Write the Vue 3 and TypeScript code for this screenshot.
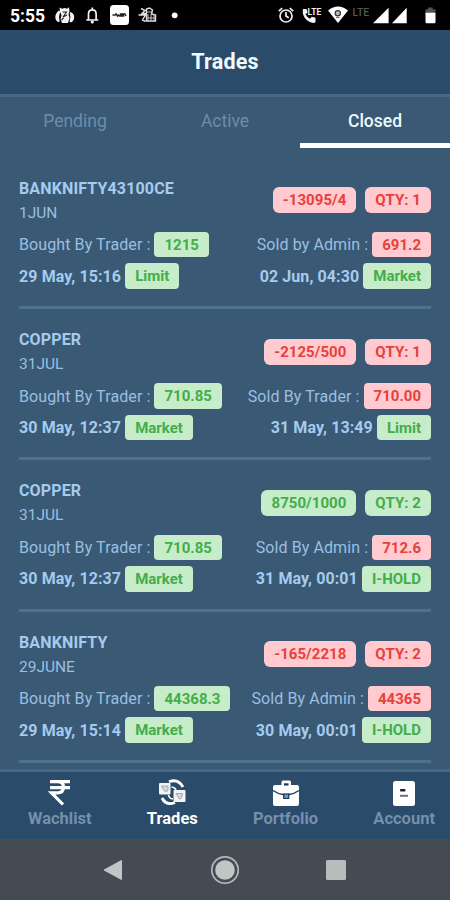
<script setup lang="ts">
type Tone = 'green' | 'red'
interface Leg { label: string; price: string; time: string; kind: string }
interface Trade {
  name: string
  expiry: string
  result: string
  qty: number
  tone: Tone
  buy: Leg
  sell: Leg
}

const tabs: string[] = ['Pending', 'Active', 'Closed']
const activeTab = 'Closed'

const trades: Trade[] = [
  {
    name: 'BANKNIFTY43100CE', expiry: '1JUN', result: '-13095/4', qty: 1, tone: 'red',
    buy: { label: 'Bought By Trader :', price: '1215', time: '29 May, 15:16', kind: 'Limit' },
    sell: { label: 'Sold by Admin :', price: '691.2', time: '02 Jun, 04:30', kind: 'Market' },
  },
  {
    name: 'COPPER', expiry: '31JUL', result: '-2125/500', qty: 1, tone: 'red',
    buy: { label: 'Bought By Trader :', price: '710.85', time: '30 May, 12:37', kind: 'Market' },
    sell: { label: 'Sold By Trader :', price: '710.00', time: '31 May, 13:49', kind: 'Limit' },
  },
  {
    name: 'COPPER', expiry: '31JUL', result: '8750/1000', qty: 2, tone: 'green',
    buy: { label: 'Bought By Trader :', price: '710.85', time: '30 May, 12:37', kind: 'Market' },
    sell: { label: 'Sold By Admin :', price: '712.6', time: '31 May, 00:01', kind: 'I-HOLD' },
  },
  {
    name: 'BANKNIFTY', expiry: '29JUNE', result: '-165/2218', qty: 2, tone: 'red',
    buy: { label: 'Bought By Trader :', price: '44368.3', time: '29 May, 15:14', kind: 'Market' },
    sell: { label: 'Sold By Admin :', price: '44365', time: '30 May, 00:01', kind: 'I-HOLD' },
  },
]

const navItems: string[] = ['Wachlist', 'Trades', 'Portfolio', 'Account']
const activeNav = 'Trades'
</script>

<template>
  <div class="screen">
    <div class="status">
      <span class="clock">5:55</span>
      <svg class="notices" width="130" height="30" viewBox="54 0 130 30">
        <g fill="#f4f4f4">
          <path d="M58.800 10.500q-3.500 3-3.500 6.500 0 3.500 3 5l1.500-.8q-1.600-4 .5-9.500zM70.500 12q3.700 1.500 3.700 5 0 3.700-3.200 5.500l-1.500-1q1.800-4 .2-8.500z" />
          <path d="M59.500 7.500l2.500 1.200 2.500-.7 2.500.7 2-1.500.5 4.300-1 2.500 1 4-1.500 5h-6l-1.500-4 1-4-1.500-3z" />
          <path d="M62.500 12h4l-3.500 5 4-2M61.500 20l2-2" fill="none" stroke="#222" stroke-width="1.100" />
        </g>
        <path d="M88.500 20v-6q0-4.200 3.800-4.200t3.800 4.200v6zM86.300 20h12M92.300 7.500v2" fill="none" stroke="#f4f4f4" stroke-width="1.700" />
        <circle cx="92.300" cy="22" r="1.600" fill="#f4f4f4" />
        <rect x="110" y="5" width="19" height="20" rx="3.500" fill="#fff" />
        <path d="M112.500 15h2.500l1-1 1.500 2 1-1 1 1h1v-2h1.500v2h1.500v-2h1.500l1 2" fill="none" stroke="#222" stroke-width="1.500" />
        <path d="M141 8.500l4 2-3 3h5M138.500 15h7l-3 5 3 1.500M146.500 9l3-1 3 2-1 4 4 1v6h-9z" fill="none" stroke="#dedede" stroke-width="1.400" />
        <path d="M147 12h5M148 14v7M151 14v7M154 15v6M146 18h9" stroke="#c7c7c7" stroke-width="1" />
        <circle cx="174.700" cy="15.300" r="2.900" fill="#fff" />
      </svg>
      <svg class="signals" width="172" height="30" viewBox="274 0 172 30">
        <g fill="none" stroke="#efefef" stroke-width="1.700">
          <circle cx="286" cy="16" r="6" />
          <path d="M286 12v4l2.700 1.800M278.800 11.200l3.400-3M289.800 8.200l3.400 3" />
        </g>
        <path d="M303 9h3.500l1 3.500-2 1.700q1.500 3 4.500 4.500l1.800-2 3.700 1v3.500q0 1.700-1.700 1.700Q308 22.500 304.500 17.500 302 13.500 303 9z" fill="#f4f4f4" />
        <text x="307.500" y="14.500" class="lte">LTE</text>
        <path d="M328 10.500q10-8 20 0L338 23z" fill="#fff" />
        <circle cx="337.800" cy="13.300" r="2.600" fill="#bbb" stroke="#333" stroke-width="1.200" />
        <path d="M336 17.500h3.500" stroke="#777" stroke-width="1.200" />
        <text x="352.500" y="16" class="lte dim">LTE</text>
        <path d="M373 23.300L388.600 7.800V23.300zM392 23.300L406.700 7.800V23.300z" fill="#fff" />
        <path d="M425.500 13V9.300h2.700V7.500h4.500v1.800h2.700V13z" fill="#525252" />
        <path d="M425.500 12.700h10V22q0 1.200-1.200 1.200h-7.600q-1.200 0-1.200-1.200z" fill="#fff" />
      </svg>
    </div>

    <header class="header"><h1>Trades</h1></header>

    <nav class="tabs">
      <span v-for="tab in tabs" :key="tab" class="tab" :class="{ active: tab === activeTab }">{{ tab }}</span>
    </nav>

    <main class="list">
      <article v-for="(t, i) in trades" :key="i" class="trade">
        <div class="top">
          <div class="title">
            <div class="name">{{ t.name }}</div>
            <div class="expiry">{{ t.expiry }}</div>
          </div>
          <div class="badges">
            <span class="chip big" :class="t.tone">{{ t.result }}</span>
            <span class="chip big" :class="t.tone">QTY: {{ t.qty }}</span>
          </div>
        </div>
        <div class="row">
          <div class="pair"><span class="label">{{ t.buy.label }}</span><span class="chip green">{{ t.buy.price }}</span></div>
          <div class="pair"><span class="label">{{ t.sell.label }}</span><span class="chip red">{{ t.sell.price }}</span></div>
        </div>
        <div class="row">
          <div class="pair"><span class="time">{{ t.buy.time }}</span><span class="chip green">{{ t.buy.kind }}</span></div>
          <div class="pair"><span class="time">{{ t.sell.time }}</span><span class="chip green">{{ t.sell.kind }}</span></div>
        </div>
      </article>
    </main>

    <footer class="nav">
      <div v-for="item in navItems" :key="item" class="item" :class="{ active: item === activeNav }">
        <svg v-if="item === 'Wachlist'" width="28" height="28" viewBox="0 0 28 28">
          <path d="M4 2.700h20M4 8.700h20M4 2.700h7.500q6 0 6 5.500t-6 5.600H5.500L17 25.500" fill="none" stroke="#fff" stroke-width="3.200" />
        </svg>
        <svg v-else-if="item === 'Trades'" width="28" height="28" viewBox="0 0 28 28">
          <path d="M11 2.800Q20-.8 25 8M4 19q4 8 13 4.500" fill="none" stroke="#fff" stroke-width="2.800" />
          <path d="M13.500 8q4 .5 4.500 3.500M10.500 16q.5 3.500 4.500 4" fill="none" stroke="#fff" stroke-width="1.600" />
          <rect x="1" y="4" width="11.500" height="11.500" rx="1" fill="#f1f3f5" />
          <rect x="15.500" y="11" width="12" height="12" rx="1" fill="#f1f3f5" />
          <path d="M3.500 7h6.500v4.500q-2 2-4 0zM18 14.500h6.500l-1 4.500-2 1z" fill="#d3d9de" stroke="#909aa2" stroke-width=".8" />
        </svg>
        <svg v-else-if="item === 'Portfolio'" width="28" height="28" viewBox="0 0 28 28">
          <path d="M9.500 6V3q0-1.500 1.500-1.500h6.500q1.500 0 1.500 1.500v3h6q2 0 2 2v17q0 2-2 2H3q-2 0-2-2V8q0-2 2-2z" fill="#fff" />
          <rect x="12" y="4.300" width="4.500" height="2.200" fill="#17365d" />
          <path d="M1 11.500q5 3.500 10 4h6q5-.5 10-4" fill="none" stroke="#17365d" stroke-width="1.300" />
          <path d="M11.700 15h5v4.500h-5z" fill="#7d91a6" stroke="#17365d" stroke-width="1.200" />
        </svg>
        <svg v-else width="28" height="28" viewBox="0 0 28 28">
          <rect x="3" y="2" width="22" height="25" rx="2.500" fill="#fff" />
          <rect x="10" y="10" width="5.500" height="2.500" rx="1" fill="#17212e" />
          <path d="M10 16.800h8" stroke="#66727f" stroke-width="2" />
        </svg>
        <span>{{ item }}</span>
      </div>
    </footer>

    <div class="system">
      <svg width="20" height="22" viewBox="0 0 20 22"><path d="M18.500 1.500v19L1 11z" fill="#c0c5c6" stroke="#c0c5c6" stroke-linejoin="round" /></svg>
      <svg width="30" height="30" viewBox="0 0 30 30"><circle cx="15" cy="15" r="13.200" fill="none" stroke="#b3b8ba" stroke-width="1.700" /><circle cx="15" cy="15" r="9.800" fill="#c0c5c6" /></svg>
      <svg width="20" height="20" viewBox="0 0 20 20"><rect width="20" height="20" rx="1.500" fill="#b7bdbd" /></svg>
    </div>
  </div>
</template>

<style>
body { margin: 0; background: #395975; }
</style>

<style scoped>
.screen {
  width: 450px;
  height: 900px;
  display: flex;
  flex-direction: column;
  overflow: hidden;
  background: #395975;
  font-family: Roboto, sans-serif;
}
.status {
  flex: none;
  height: 30px;
  display: flex;
  background: #000;
  color: #fff;
}
.clock {
  width: 44px;
  padding-left: 10px;
  font-size: 17.500px;
  font-weight: 700;
  line-height: 32px;
}
.signals { margin-left: auto; margin-right: 4px; }
.lte { font: 700 8.500px Roboto, sans-serif; fill: #efefef; }
.lte.dim { font: 500 10.500px Roboto, sans-serif; fill: #555; }
.header {
  flex: none;
  box-sizing: border-box;
  height: 67px;
  border-bottom: 3px solid #466987;
  background: #2a4b69;
}
h1 {
  margin: 0;
  color: #f0fbff;
  font-size: 21.500px;
  font-weight: 700;
  letter-spacing: .2px;
  line-height: 64px;
  text-align: center;
}
.tabs {
  flex: none;
  display: grid;
  grid-template-columns: repeat(3, 1fr);
  grid-template-rows: 51px;
  height: 51px;
}
.tab {
  box-sizing: border-box;
  height: 51px;
  color: #6d8dac;
  font-size: 17.500px;
  line-height: 49px;
  text-align: center;
}
.tab.active {
  border-bottom: 5px solid #fff;
  color: #eefaff;
  font-weight: 500;
}
.list {
  flex: 1;
  min-height: 0;
  overflow: hidden;
  padding: 9.700px 19px 0;
}
.trade {
  box-sizing: border-box;
  height: 151.330px;
  padding-top: 20px;
  border-bottom: 3px solid #4e7191;
  color: #a5cbef;
}
.top {
  display: flex;
  justify-content: space-between;
  height: 54.500px;
}
.name { font-size: 16px; font-weight: 700; letter-spacing: .14px; line-height: 21px; }
.expiry { margin-top: 4px; font-size: 15.500px; line-height: 21px; color: #9bbfe1; }
.badges { display: flex; gap: 9px; padding-top: 9.700px; }
.row {
  display: flex;
  justify-content: space-between;
  height: 31.500px;
}
.pair { display: flex; align-items: center; height: 25px; gap: 4px; }
.label { font-size: 16px; letter-spacing: .1px; color: #9bbfe1; }
.time { font-size: 16px; font-weight: 700; letter-spacing: .1px; }
.chip {
  box-sizing: border-box;
  height: 25.500px;
  padding: 0 10px;
  border-radius: 4px;
  font-size: 15px;
  font-weight: 700;
  line-height: 26px;
  white-space: nowrap;
}
.chip.big { height: 26px; border-radius: 6px; letter-spacing: .05px; }
.green { background: #c6ecc9; color: #44ad49; }
.red { background: #ffcbd0; color: #e8403b; }
.nav {
  flex: none;
  box-sizing: border-box;
  display: flex;
  justify-content: space-between;
  height: 70px;
  padding: 7px 15px 0 28px;
  border-top: 3px solid #466987;
  background: #2a4b69;
}
.item {
  display: flex;
  flex-direction: column;
  align-items: center;
  color: #7390ad;
  font-size: 16.500px;
  font-weight: 700;
  line-height: 24px;
}
.item.active { color: #fff; }
.system {
  flex: none;
  display: flex;
  align-items: center;
  justify-content: space-between;
  box-sizing: border-box;
  height: 61px;
  padding: 0 104px 0 103px;
  background: #454b52;
}
</style>
